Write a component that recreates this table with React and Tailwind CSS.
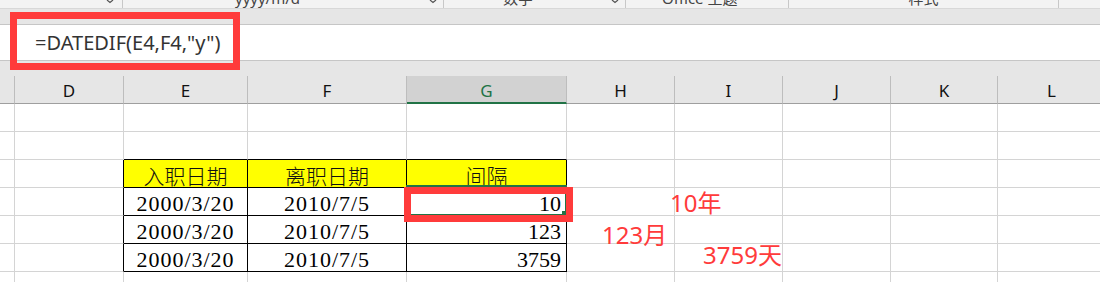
import React from "react";

const ROWS = [1, 2, 3, 4, 5, 6, 7];
const COLS = [0, 1, 2, 3, 4, 5, 6, 7, 8, 9];
const LABELS = ["", "D", "E", "F", "G", "H", "I", "J", "K", "L"];

const DATA = {
  3: { 2: "入职日期", 3: "离职日期", 4: "间隔" },
  4: { 2: "2000/3/20", 3: "2010/7/5", 4: "10" },
  5: { 2: "2000/3/20", 3: "2010/7/5", 4: "123" },
  6: { 2: "2000/3/20", 3: "2010/7/5", 4: "3759" },
};

function cellClass(r, c) {
  const rightBlack = r >= 3 && r <= 6 && c >= 1 && c <= 4;
  const bottomBlack = r >= 2 && r <= 6 && c >= 2 && c <= 4;
  const yellow = r === 3 && c >= 2 && c <= 4;
  const parts = ["h-[28px] border-r border-b flex items-end min-w-0"];
  parts.push(rightBlack ? "border-r-black" : "border-r-[#d4d4d4]");
  parts.push(bottomBlack ? "border-b-black" : "border-b-[#d4d4d4]");
  parts.push(yellow ? "bg-[#ffff00]" : "bg-white");
  if (c === 4 && r >= 4) parts.push("justify-end pr-[5px]");
  else parts.push("justify-center");
  return parts.join(" ");
}

function RibbonArrow() {
  return (
    <svg width="8" height="4" viewBox="0 0 8 4" className="block">
      <path d="M1 0 L4 2.5 L7 0" fill="none" stroke="#555" strokeWidth="1.2" />
    </svg>
  );
}

export default function App() {
  return (
    <div className="relative w-[1100px] h-[282px] overflow-hidden bg-white font-['Noto_Sans','Noto_Sans_CJK_SC',sans-serif]">
      {/* ribbon remnant */}
      <div className="h-[9px] bg-[#f3f3f3] border-b border-b-[#d8d8d8] flex overflow-hidden text-[15px] leading-[15px] text-[#444]">
        <div className="w-[123px] shrink-0 border-r border-r-[#c8c8c8] flex justify-end items-start pr-[8px]">
          <RibbonArrow />
        </div>
        <div className="w-[321px] shrink-0 border-r border-r-[#c8c8c8] flex items-start pr-[6px]">
          <span className="-mt-[9px] ml-[112px] flex-1">yyyy/m/d</span>
          <RibbonArrow />
        </div>
        <div className="w-[182px] shrink-0 border-r border-r-[#c8c8c8] flex items-start pr-[6px]">
          <span className="-mt-[9px] ml-[59px] flex-1">数字</span>
          <RibbonArrow />
        </div>
        <div className="w-[163px] shrink-0 border-r border-r-[#c8c8c8] flex items-start">
          <span className="-mt-[9px] ml-[36px]">Office 主题</span>
        </div>
        <div className="w-[270px] shrink-0 border-r border-r-[#c8c8c8] flex items-start justify-center">
          <span className="-mt-[9px]">样式</span>
        </div>
        <div className="flex-1" />
      </div>

      {/* gray band */}
      <div className="h-[16px] bg-[#e6e6e6] border-b border-b-[#c6c6c6]" />

      {/* formula bar */}
      <div className="h-[36px] bg-white border-b border-b-[#c6c6c6] flex items-center pl-[35px]">
        <span className="text-[20px] leading-[20px] text-[#333] font-['Noto_Sans',sans-serif]">
          =DATEDIF(E4,F4,"y")
        </span>
      </div>

      {/* gray band */}
      <div className="h-[15px] bg-[#e6e6e6]" />

      {/* sheet grid */}
      <div className="w-[1106px] grid grid-cols-[15px_109px_124px_159px_160px_108px_108px_108px_107px_108px]">
        {COLS.map((c) =>
          c === 4 ? (
            <div
              key={"h" + c}
              className="h-[28px] border-r border-r-[#bdbdbd] border-b-2 border-b-[#217346] bg-[#d2d2d2] flex items-center justify-center text-[17px] leading-[17px] text-[#217346] pt-[2px]"
            >
              {LABELS[c]}
            </div>
          ) : (
            <div
              key={"h" + c}
              className="h-[28px] border-r border-r-[#bdbdbd] border-b border-b-[#9f9f9f] bg-[#e6e6e6] flex items-center justify-center text-[17px] leading-[17px] text-[#111] pt-[2px]"
            >
              {LABELS[c]}
            </div>
          )
        )}
        {ROWS.map((r) =>
          COLS.map((c) => {
            const t = DATA[r] && DATA[r][c];
            const isDate = r >= 4 && (c === 2 || c === 3);
            return (
              <div key={r + "-" + c} className={cellClass(r, c)}>
                {t ? (
                  r === 3 ? (
                    <span className="text-[21px] leading-[22px] pb-[1px] font-light text-[#111] font-['Noto_Sans_CJK_SC',sans-serif]">
                      {t}
                    </span>
                  ) : (
                    <span
                      className={
                        isDate
                          ? "text-[22px] leading-[22px] tracking-[1px] text-black font-['Liberation_Serif',serif]"
                          : "text-[22px] leading-[22px] text-black font-['Liberation_Serif',serif]"
                      }
                    >
                      {t}
                    </span>
                  )
                ) : null}
              </div>
            );
          })
        )}
      </div>

      {/* active cell G4 */}
      <div className="absolute left-[406px] top-[185px] w-[161px] h-[31px] border-2 border-[#217346]" />
      <div className="absolute left-[562px] top-[211px] w-[4px] h-[4px] bg-[#217346]" />

      {/* red highlight boxes */}
      <div className="absolute left-[10px] top-[12px] w-[230px] h-[58px] border-[7px] border-[#ff3b3b]" />
      <div className="absolute left-[404px] top-[187px] w-[169px] h-[35px] border-[7px] border-[#ff3b3b]" />

      {/* red annotations */}
      <span className="absolute left-[670px] top-[191px] text-[24px] leading-[24px] text-[#ff3b3b] font-['Noto_Sans','Noto_Sans_CJK_SC',sans-serif] whitespace-nowrap">
        10年
      </span>
      <span className="absolute left-[602px] top-[223px] text-[24px] leading-[24px] text-[#ff3b3b] font-['Noto_Sans','Noto_Sans_CJK_SC',sans-serif] whitespace-nowrap">
        123月
      </span>
      <span className="absolute left-[703px] top-[243px] text-[24px] leading-[24px] text-[#ff3b3b] font-['Noto_Sans','Noto_Sans_CJK_SC',sans-serif] whitespace-nowrap">
        3759天
      </span>
    </div>
  );
}
